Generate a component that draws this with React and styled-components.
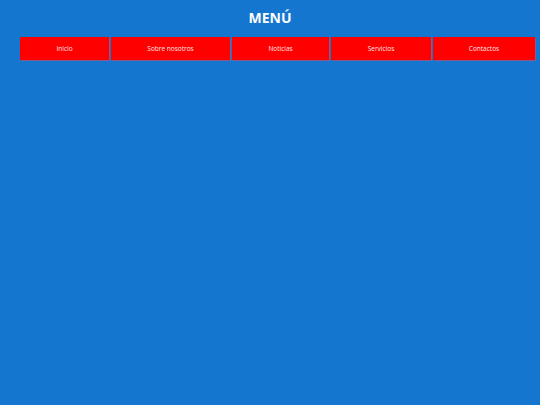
import React from 'react'
import styled, { createGlobalStyle } from 'styled-components'

const GlobalStyle = createGlobalStyle`
  html, body {
    margin: 0;
    padding: 0;
    background: #1576cf;
  }
  body {
    font-family: "Comic Sans MS", "Open Sans", "DejaVu Sans", sans-serif;
  }
`

const Page = styled.div`
  width: 540px;
  height: 405px;
  padding-top: 8px;
  box-sizing: border-box;
`

const Title = styled.h1`
  margin: 0;
  height: 20px;
  line-height: 20px;
  text-align: center;
  color: #ffffff;
  font-size: 14px;
  font-weight: bold;
`

const Nav = styled.ul`
  list-style: none;
  margin: 9px 0 0 20px;
  padding: 0;
  width: 515px;
  display: flex;
  gap: 2px;
`

const Item = styled.li`
  flex: 0 0 ${props => props.w}px;
  height: 23px;
  background: #ff0000;
  box-shadow: 0 0 1px 0.5px #8a5a8a;
  display: flex;
  align-items: center;
  justify-content: center;
  color: #ffe8e8;
  font-size: 6.5px;
`

const items = [
  { label: 'Inicio', w: 89 },
  { label: 'Sobre nosotros', w: 119 },
  { label: 'Noticias', w: 97 },
  { label: 'Servicios', w: 100 },
  { label: 'Contactos', w: 102 },
]

export default function App() {
  return (
    <Page>
      <GlobalStyle />
      <Title>MENÚ</Title>
      <Nav>
        {items.map(item => (
          <Item key={item.label} w={item.w}>{item.label}</Item>
        ))}
      </Nav>
    </Page>
  )
}
